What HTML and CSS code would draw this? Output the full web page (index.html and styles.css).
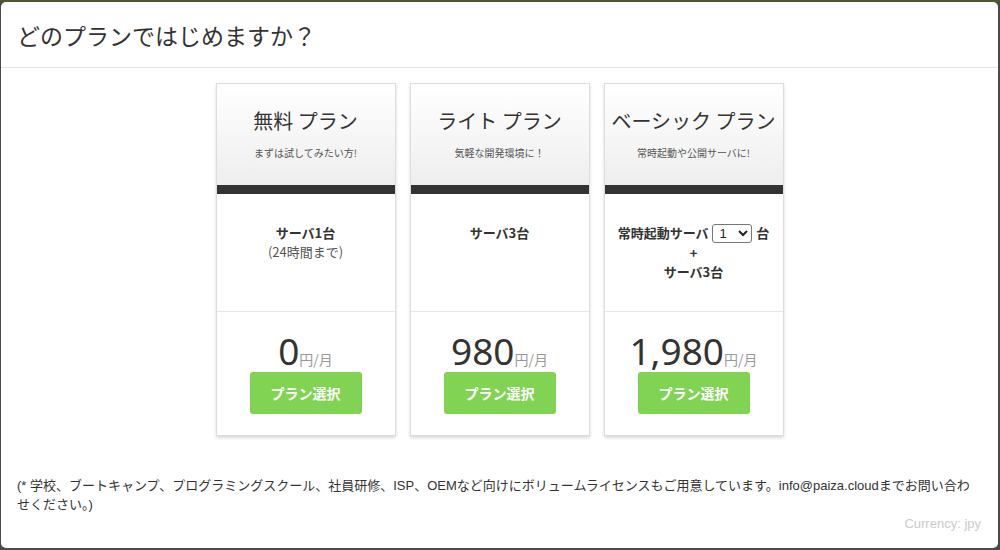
FILE: index.html
```html
<!DOCTYPE html>
<html lang="ja">
<head>
  <meta charset="UTF-8" />
  <title>プラン選択</title>
  <link rel="stylesheet" href="styles.css">
</head>
<body>
  <div class="modal">
    <div class="modal-header">
      <h1>どのプランではじめますか？</h1>
    </div>

    <div class="modal-body">
      <div class="plans">
        <div class="plan">
          <div class="plan-head">
            <h2>無料 プラン</h2>
            <p>まずは試してみたい方!</p>
          </div>
          <div class="plan-features">
            <b>サーバ1台</b><br>
            <span class="note">(24時間まで)</span>
          </div>
          <div class="plan-price">
            <div class="price"><span class="num">0</span><span class="unit">円/月</span></div>
            <button class="select-btn">プラン選択</button>
          </div>
        </div>

        <div class="plan">
          <div class="plan-head">
            <h2>ライト プラン</h2>
            <p>気軽な開発環境に！</p>
          </div>
          <div class="plan-features">
            <b>サーバ3台</b>
          </div>
          <div class="plan-price">
            <div class="price"><span class="num">980</span><span class="unit">円/月</span></div>
            <button class="select-btn">プラン選択</button>
          </div>
        </div>

        <div class="plan">
          <div class="plan-head">
            <h2>ベーシック プラン</h2>
            <p>常時起動や公開サーバに!</p>
          </div>
          <div class="plan-features">
            <b>常時起動サーバ</b>
            <select class="count">
              <option>1</option>
              <option>2</option>
              <option>3</option>
            </select>
            <b>台</b><br>
            <b>+</b><br>
            <b>サーバ3台</b>
          </div>
          <div class="plan-price">
            <div class="price"><span class="num">1,980</span><span class="unit">円/月</span></div>
            <button class="select-btn">プラン選択</button>
          </div>
        </div>
      </div>

      <p class="footnote">(* 学校、ブートキャンプ、プログラミングスクール、社員研修、ISP、OEMなど向けにボリュームライセンスもご用意しています。info@paiza.cloudまでお問い合わせください。)</p>
      <div class="currency">Currency: jpy</div>
    </div>
  </div>
</body>
</html>
```

FILE: styles.css
```css
html, body {
  margin: 0;
  height: 100%;
}

body {
  background: linear-gradient(#4d5a30 0 2px, #4a4a4a 2px);
  font-family: "Liberation Sans", "Noto Sans CJK JP", sans-serif;
  color: #333;
  overflow: hidden;
}

.modal {
  margin: 2px 2px 0 1px;
  height: 546px;
  background: #fff;
  border-radius: 5px;
  box-sizing: border-box;
}

.modal-header {
  height: 66px;
  box-sizing: border-box;
  padding: 0 16px;
  border-bottom: 1px solid #e5e5e5;
  display: flex;
  align-items: center;
}

.modal-header h1 {
  margin: 0;
  font-family: "Noto Sans CJK JP", sans-serif;
  font-size: 23px;
  font-weight: normal;
  color: #333;
  line-height: 30px;
}

.modal-body {
  padding: 15px 16px 0;
}

.plans {
  display: flex;
  justify-content: center;
  gap: 14px;
}

.plan {
  width: 180px;
  box-sizing: border-box;
  border: 1px solid #ddd;
  box-shadow: 0 2px 3px rgba(0, 0, 0, 0.15);
  text-align: center;
}

/* gradient band with the dark bar underneath */
.plan-head {
  height: 110px;
  box-sizing: border-box;
  padding-top: 22px;
  background: linear-gradient(#fff, #eee);
  border-bottom: 9px solid #333;
}

.plan-head h2 {
  margin: 0;
  font-family: "Noto Sans CJK JP", sans-serif;
  font-size: 20px;
  font-weight: normal;
  line-height: 30px;
  color: #333;
}

.plan-head p {
  margin: 9px 0 0;
  font-family: "Noto Sans CJK JP", sans-serif;
  font-size: 10px;
  line-height: 16px;
  color: #555;
}

.plan-features {
  height: 118px;
  box-sizing: border-box;
  padding-top: 29px;
  border-bottom: 1px solid #e8e8e8;
  font-family: "Noto Sans CJK JP", sans-serif;
  font-size: 13px;
  line-height: 19px;
}

.plan-features b {
  font-weight: bold;
  color: #333;
}

.plan-features .note {
  color: #555;
}

.count {
  width: 40px;
  height: 19px;
  font-size: 13px;
  padding: 0 2px;
  border: 1px solid #767676;
  border-radius: 3px;
  background: #fff;
  color: #222;
  vertical-align: 0;
  margin: 0 1px;
}

.plan-price {
  padding: 19px 0 21px;
}

.price {
  line-height: 40px;
  height: 41px;
  font-family: "Noto Sans", sans-serif;
}

.price .num {
  font-size: 37px;
  color: #333;
}

.price .unit {
  font-family: "Noto Sans CJK JP", sans-serif;
  font-size: 14px;
  color: #999;
}

.select-btn {
  width: 112px;
  height: 42px;
  border: none;
  border-radius: 3px;
  background: #81d354;
  color: #fff;
  font-family: "Noto Sans CJK JP", sans-serif;
  font-size: 14px;
  font-weight: bold;
  cursor: pointer;
}

.footnote {
  margin: 40px 0 0;
  font-size: 13px;
  line-height: 19px;
  color: #333;
}

.currency {
  text-align: right;
  font-size: 13px;
  line-height: 19px;
  color: #ccc;
  padding-right: 1px;
}
```
